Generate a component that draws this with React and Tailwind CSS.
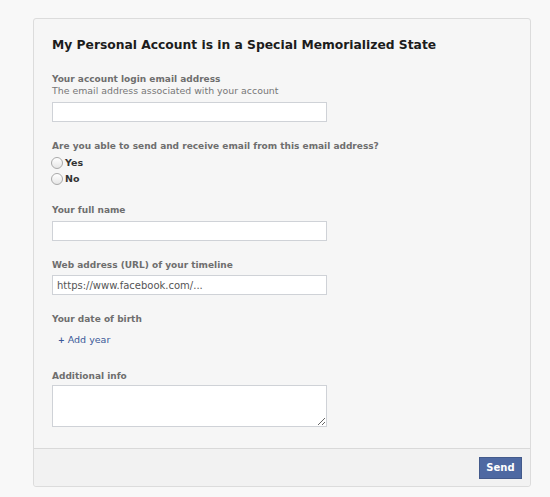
import React from 'react';

const Label = ({ children }) => (
  <p className="text-[9px] font-bold leading-[12px] text-[#6e6e6e]">{children}</p>
);

const TextInput = ({ placeholder, top = 'mt-[5px]' }) => (
  <input
    type="text"
    placeholder={placeholder}
    className={`block w-[275px] h-[20px] ${top} bg-white border border-[#cfd2d7] px-[4px] text-[10px] text-[#333] placeholder:text-[#555] outline-none`}
  />
);

const Radio = ({ label }) => (
  <label className="flex items-center h-[16px]">
    <span className="w-[12px] h-[12px] -ml-[1px] rounded-full border border-[#a9a9a9] bg-gradient-to-b from-white to-[#e6e6e6]" />
    <span className="ml-[2px] text-[9.5px] font-bold text-[#333]">{label}</span>
  </label>
);

export default function App() {
  return (
    <div className="w-[550px] h-[497px] bg-[#f8f8f8] pt-[18px] pl-[33px] font-['DejaVu_Sans',sans-serif]">
      <div className="w-[498px] h-[469px] bg-[#f6f6f6] border border-[#dcdcdc] rounded-[3px] flex flex-col">
        <div className="flex-1 pl-[18px] pt-[18px]">
          <h1 className="text-[12.3px] font-bold leading-[16px] text-[#1c1c1c]">
            My Personal Account is in a Special Memorialized State
          </h1>

          <div className="mt-[20px]">
            <Label>Your account login email address</Label>
            <p className="text-[9.4px] leading-[12px] text-[#777]">The email address associated with your account</p>
            <TextInput />
          </div>

          <div className="mt-[18px]">
            <Label>Are you able to send and receive email from this email address?</Label>
            <div className="mt-[3px]">
              <Radio label="Yes" />
              <Radio label="No" />
            </div>
          </div>

          <div className="mt-[17px]">
            <Label>Your full name</Label>
            <TextInput />
          </div>

          <div className="mt-[18px]">
            <Label>Web address (URL) of your timeline</Label>
            <TextInput placeholder="https://www.facebook.com/..." top="mt-[4px]" />
          </div>

          <div className="mt-[18px]">
            <Label>Your date of birth</Label>
            <p className="mt-[9px] ml-[6px] text-[9.5px] leading-[12px] text-[#3b5998]">
              <span className="font-bold text-[8px]">+</span> Add year
            </p>
          </div>

          <div className="mt-[23px]">
            <Label>Additional info</Label>
            <textarea className="block w-[275px] h-[42px] mt-[3px] bg-white border border-[#cfd2d7] outline-none" />
          </div>
        </div>

        <div className="h-[38px] border-t border-[#d9d9d9] bg-[#f2f2f2] flex items-center justify-end pr-[8px] rounded-b-[3px]">
          <button className="h-[22px] w-[43px] bg-[#4e69a2] border border-[#435a8b] text-white text-[10px] font-bold">
            Send
          </button>
        </div>
      </div>
    </div>
  );
}
